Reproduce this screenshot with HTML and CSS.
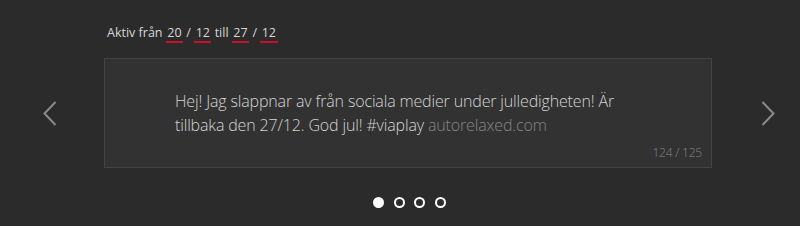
FILE: index.html
```html
<!DOCTYPE html>
<html lang="sv">
<head>
    <meta charset="UTF-8">
    <title>Autosvar</title>
    <link rel="stylesheet" href="styles.css">
</head>
<body>
    <div class="slider">
        <div class="period">
            Aktiv från
            <span class="num">20</span> / <span class="num">12</span>
            till
            <span class="num">27</span> / <span class="num">12</span>
        </div>

        <div class="row">
            <button class="arrow prev">
                <svg width="14" height="25" viewBox="0 0 14 25"><path d="M12.5 1 L1.5 12.5 L12.5 24" fill="none" stroke="#8a8a8a" stroke-width="2"/></svg>
            </button>

            <div class="card">
                <p class="message">Hej! Jag slappnar av från sociala medier under julledigheten! Är tillbaka den 27/12. God jul! #viaplay <span class="link">autorelaxed.com</span></p>
                <div class="count">124 / 125</div>
            </div>

            <button class="arrow next">
                <svg width="14" height="25" viewBox="0 0 14 25"><path d="M1.5 1 L12.5 12.5 L1.5 24" fill="none" stroke="#8a8a8a" stroke-width="2"/></svg>
            </button>
        </div>

        <div class="dots">
            <span class="dot active"></span>
            <span class="dot"></span>
            <span class="dot"></span>
            <span class="dot"></span>
        </div>
    </div>
</body>
</html>
```

FILE: styles.css
```css
* {
    margin: 0;
    padding: 0;
    box-sizing: border-box;
}

body {
    background: #2b2b2b;
    font-family: 'Open Sans', sans-serif;
    width: 800px;
    height: 226px;
    overflow: hidden;
}

.slider {
    padding-top: 24px;
}

.period {
    margin-left: 107px;
    font-size: 12.5px;
    color: #d6d6d6;
    height: 20px;
    line-height: 18px;
}

.num {
    display: inline-block;
    border-bottom: 2px solid #c8102e;
    line-height: 16px;
    padding: 0 1.5px;
}

.row {
    display: flex;
    align-items: center;
    gap: 4px;
    margin-top: 14px;
}

.arrow {
    flex: none;
    display: flex;
    justify-content: center;
    background: none;
    border: none;
}

.prev {
    width: 100px;
}

.next {
    width: 104px;
}

.card {
    flex: none;
    width: 608px;
    height: 110px;
    background: #323232;
    border: 1px solid #444;
    padding: 30px 0 0 70px;
    position: relative;
}

.message {
    width: 470px;
    font-size: 16px;
    font-weight: 300;
    line-height: 24px;
    letter-spacing: -0.15px;
    color: #d4d4d4;
}

.link {
    color: #868686;
}

.count {
    position: absolute;
    right: 9px;
    bottom: 6px;
    font-size: 12px;
    font-weight: 300;
    letter-spacing: -0.2px;
    color: #858585;
}

.dots {
    display: flex;
    justify-content: center;
    gap: 9.6px;
    margin-top: 29px;
    padding-left: 19px;
}

.dot {
    width: 11px;
    height: 11px;
    border-radius: 50%;
    border: 2px solid #fff;
}

.dot.active {
    background: #fff;
}
```
